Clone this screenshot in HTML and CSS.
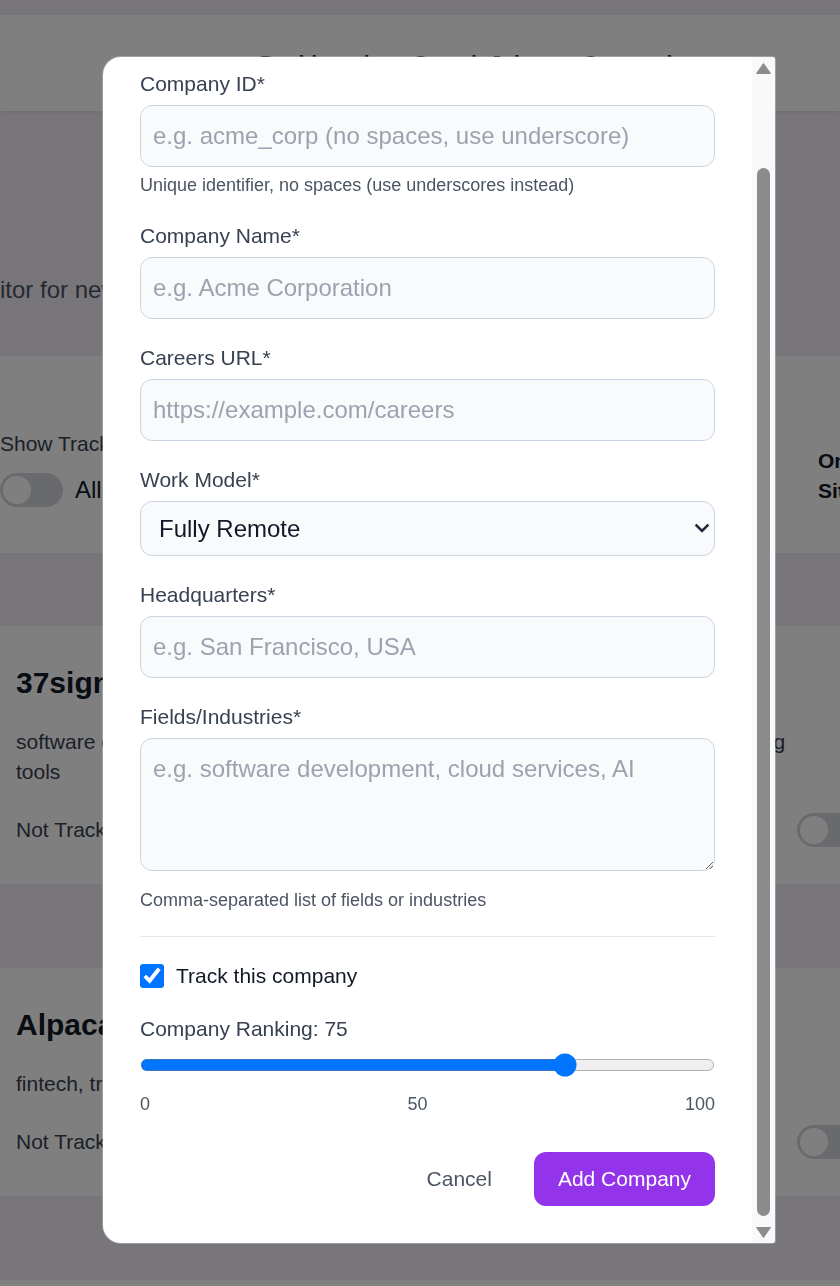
FILE: index.html
```html
<!DOCTYPE html>
<html lang="en">
<head>
<meta charset="utf-8">
<title>Companies</title>
<link rel="stylesheet" href="styles.css">
</head>
<body>
<div class="page">
  <header class="topbar">
    <nav class="nav">
      <a class="nav-link">Dashboard</a>
      <a class="nav-link">Search Jobs</a>
      <a class="nav-link">Companies</a>
    </nav>
  </header>

  <section class="hero">
    <h1 class="hero-title">Companies</h1>
    <p class="hero-sub">Monitor for new job openings at the companies you follow</p>
  </section>

  <section class="card filters">
    <div class="filter-left">
      <div class="filter-label">Show Tracked</div>
      <div class="toggle-row">
        <span class="toggle"><span class="knob"></span></span>
        <span class="toggle-text">All</span>
      </div>
    </div>
    <div class="filter-right">On-Site</div>
  </section>

  <article class="card company">
    <h3 class="company-name">37signals</h3>
    <p class="company-desc">software development, project management, team communication, remote working tools</p>
    <div class="company-row">
      <span class="company-status">Not Tracked</span>
      <span class="toggle"><span class="knob"></span></span>
    </div>
  </article>

  <article class="card company">
    <h3 class="company-name">Alpaca</h3>
    <p class="company-desc">fintech, trading APIs, investing, brokerage infrastructure</p>
    <div class="company-row">
      <span class="company-status">Not Tracked</span>
      <span class="toggle"><span class="knob"></span></span>
    </div>
  </article>

  <article class="card company">
    <h3 class="company-name">Anthropic</h3>
  </article>
</div>

<div class="overlay">
  <div class="dialog">
    <form class="modal">
      <div class="modal-body">
        <h2 class="modal-title">Add New Company</h2>

        <div class="field">
          <label class="label" for="cid">Company ID*</label>
          <input id="cid" class="input" type="text" placeholder="e.g. acme_corp (no spaces, use underscore)">
          <p class="hint">Unique identifier, no spaces (use underscores instead)</p>
        </div>

        <div class="field">
          <label class="label" for="cname">Company Name*</label>
          <input id="cname" class="input" type="text" placeholder="e.g. Acme Corporation">
        </div>

        <div class="field">
          <label class="label" for="curl">Careers URL*</label>
          <input id="curl" class="input" type="text" placeholder="https://example.com/careers">
        </div>

        <div class="field">
          <label class="label" for="cmodel">Work Model*</label>
          <div class="select-wrap">
            <select id="cmodel" class="select">
              <option>Fully Remote</option>
              <option>Hybrid</option>
              <option>On-Site</option>
            </select>
            <svg class="chevron" width="14" height="9" viewBox="0 0 14 9" aria-hidden="true">
              <polyline points="1.5,1.5 7,7 12.5,1.5" fill="none" stroke="#1f2937" stroke-width="2.6" stroke-linecap="square"/>
            </svg>
          </div>
        </div>

        <div class="field">
          <label class="label" for="chq">Headquarters*</label>
          <input id="chq" class="input" type="text" placeholder="e.g. San Francisco, USA">
        </div>

        <div class="field">
          <label class="label" for="cfields">Fields/Industries*</label>
          <textarea id="cfields" class="textarea" placeholder="e.g. software development, cloud services, AI"></textarea>
          <p class="hint hint-after-area">Comma-separated list of fields or industries</p>
        </div>

        <div class="tracking">
          <label class="check-row">
            <input class="checkbox" type="checkbox" checked>
            <span class="check-text">Track this company</span>
          </label>

          <div class="ranking">
            <label class="label" for="crank">Company Ranking: 75</label>
            <input id="crank" class="range" type="range" min="0" max="100" value="75">
            <div class="scale">
              <span>0</span>
              <span>50</span>
              <span>100</span>
            </div>
          </div>
        </div>

        <div class="actions">
          <button type="button" class="btn btn-cancel">Cancel</button>
          <button type="button" class="btn btn-primary">Add Company</button>
        </div>
      </div>
    </form>

    <div class="scrollbar" aria-hidden="true">
      <span class="sb-btn">
        <svg width="15" height="11" viewBox="0 0 15 11"><path d="M7.5 0.5 L14.5 10.5 H0.5 Z" fill="#8b8b8b" stroke="#8b8b8b" stroke-width="1" stroke-linejoin="round"/></svg>
      </span>
      <span class="sb-track"><span class="sb-thumb"></span></span>
      <span class="sb-btn">
        <svg width="15" height="11" viewBox="0 0 15 11"><path d="M0.5 0.5 H14.5 L7.5 10.5 Z" fill="#8b8b8b" stroke="#8b8b8b" stroke-width="1" stroke-linejoin="round"/></svg>
      </span>
    </div>
  </div>
</div>

<script src="script.js"></script>
</body>
</html>
```

FILE: styles.css
```css
* {
  box-sizing: border-box;
}

html,
body {
  margin: 0;
  padding: 0;
}

body {
  width: 840px;
  height: 1286px;
  overflow: hidden;
  font-family: "Liberation Sans", Arial, sans-serif;
  background: #f1edf6;
  color: #111827;
}

/* ---------- underlying page ---------- */
.page {
  width: 840px;
  height: 1286px;
  overflow: hidden;
  padding-top: 15px;
}

.topbar {
  height: 96px;
  background: #ffffff;
  box-shadow: 0 2px 5px rgba(0, 0, 0, 0.08);
  padding-top: 33px;
}

.nav {
  display: flex;
  gap: 44px;
  padding-left: 260px;
  font-size: 21px;
  line-height: 30px;
  font-weight: 700;
  color: #1f2937;
}

.hero {
  height: 245px;
  padding-top: 100px;
}

.hero-title {
  margin: 0 0 16px;
  font-size: 33px;
  line-height: 45px;
  text-align: center;
  color: #111827;
}

.hero-sub {
  margin: 0 0 0 -46.7px;
  font-size: 24px;
  line-height: 36px;
  color: #4b5563;
  white-space: nowrap;
}

.card {
  background: #ffffff;
}

.filters {
  height: 197px;
  display: grid;
  grid-template-columns: 818px 60px;
  align-items: start;
  padding-top: 73px;
}

.filter-label {
  font-size: 21px;
  line-height: 30px;
  color: #374151;
}

.toggle-row {
  margin-top: 13px;
  height: 36px;
  display: flex;
  align-items: center;
  gap: 12px;
}

.toggle {
  display: inline-flex;
  align-items: center;
  width: 63px;
  height: 34px;
  padding: 3px;
  border-radius: 17px;
  background: #d1d5db;
}

.knob {
  width: 28px;
  height: 28px;
  border-radius: 50%;
  background: #ffffff;
}

.toggle-text {
  font-size: 24px;
  line-height: 36px;
  color: #111827;
}

.filter-right {
  margin-top: 17px;
  font-size: 21px;
  line-height: 30px;
  font-weight: 700;
  color: #111827;
}

.company {
  width: 876px;
  margin-top: 73px;
  padding: 36px 16px;
}

.company + .company {
  margin-top: 84px;
}

.company-name {
  margin: 0 0 23px;
  font-size: 30px;
  line-height: 42px;
  font-weight: 700;
  color: #111827;
}

.company-desc {
  margin: 0;
  max-width: 790px;
  font-size: 21px;
  line-height: 30px;
  color: #374151;
}

.company-row {
  margin-top: 25px;
  height: 36px;
  display: flex;
  align-items: center;
  justify-content: space-between;
}

.company-status {
  font-size: 21px;
  line-height: 30px;
  color: #374151;
}

/* ---------- overlay + modal ---------- */
.overlay {
  position: fixed;
  inset: 0;
  background: rgba(0, 0, 0, 0.5);
}

.dialog {
  position: absolute;
  left: 103px;
  top: 57px;
  width: 672px;
  height: 1186px;
  display: flex;
  background: #ffffff;
  border-radius: 18px 3px 3px 18px;
  overflow: hidden;
  box-shadow: 0 0 0 1px rgba(255, 255, 255, 0.25);
}

.modal {
  flex: 1;
  min-width: 0;
  margin: 0;
  overflow-y: auto;
  scrollbar-width: none;
}

.modal-body {
  padding: 36px 37px 43px 37px;
}

.scrollbar {
  width: 23px;
  flex: none;
  display: flex;
  flex-direction: column;
  background: #f9f9f9;
}

.sb-btn {
  height: 22px;
  flex: none;
  display: flex;
  align-items: center;
  justify-content: center;
}

.sb-track {
  flex: 1;
  padding: 0 5px;
}

.sb-thumb {
  display: block;
  margin-top: 89.2px;
  height: 1047.5px;
  border-radius: 6.5px;
  background: #8b8b8b;
}

.modal-title {
  margin: 0 0 35px;
  font-size: 30px;
  line-height: 42px;
  font-weight: 700;
  color: #111827;
}

.field {
  margin-bottom: 24px;
}

.label {
  display: block;
  margin-bottom: 6px;
  font-size: 21px;
  line-height: 30px;
  color: #374151;
}

.input,
.select,
.textarea {
  display: block;
  width: 100%;
  margin: 0;
  border: 1px solid #cbd5e1;
  border-radius: 12px;
  background: #f8fafc;
  font-family: "Liberation Sans", Arial, sans-serif;
  font-size: 24px;
  color: #111827;
  outline: none;
}

.input {
  height: 62px;
  padding: 14px 12px;
}

.input::placeholder,
.textarea::placeholder {
  color: #9ca3af;
  opacity: 1;
}

.select-wrap {
  position: relative;
}

.select {
  height: 55px;
  padding: 0 40px 0 18px;
  appearance: none;
  -webkit-appearance: none;
}

.chevron {
  position: absolute;
  right: 6px;
  top: 23px;
  pointer-events: none;
}

.textarea {
  height: 133px;
  padding: 16px 12px 12px;
  line-height: normal;
  resize: vertical;
}

.hint {
  margin: 6px 0 0;
  font-size: 18px;
  line-height: 24px;
  color: #4b5563;
}

.hint-after-area {
  margin-top: 17px;
}

.tracking {
  border-top: 1px solid #e2e8f0;
  padding-top: 24px;
}

.check-row {
  display: flex;
  align-items: center;
  gap: 12px;
  height: 30px;
}

.checkbox {
  zoom: 1.5;
  width: 16px;
  height: 16px;
  margin: 0;
}

.check-text {
  font-size: 21px;
  line-height: 30px;
  color: #111827;
}

.ranking {
  margin-top: 23px;
  display: flex;
  flex-direction: column;
}

.ranking .label {
  margin-bottom: 6px;
}

.range {
  display: block;
  zoom: 1.5;
  width: 383.333px;
  height: 16px;
  margin: 2.33px 0 0;
}

.scale {
  display: flex;
  justify-content: space-between;
  margin-top: 15px;
  font-size: 18px;
  line-height: 24px;
  color: #4b5563;
}

.actions {
  display: flex;
  justify-content: flex-end;
  gap: 18px;
  margin-top: 36px;
}

.btn {
  border: 0;
  border-radius: 12px;
  padding: 12px 24px;
  font-family: "Liberation Sans", Arial, sans-serif;
  font-size: 21px;
  line-height: 30px;
  cursor: pointer;
}

.btn-cancel {
  background: transparent;
  color: #4b5563;
}

.btn-primary {
  background: #9333ea;
  color: #ffffff;
}
```

FILE: script.js
```js
document.querySelector('.modal').scrollTop = 101;
```
